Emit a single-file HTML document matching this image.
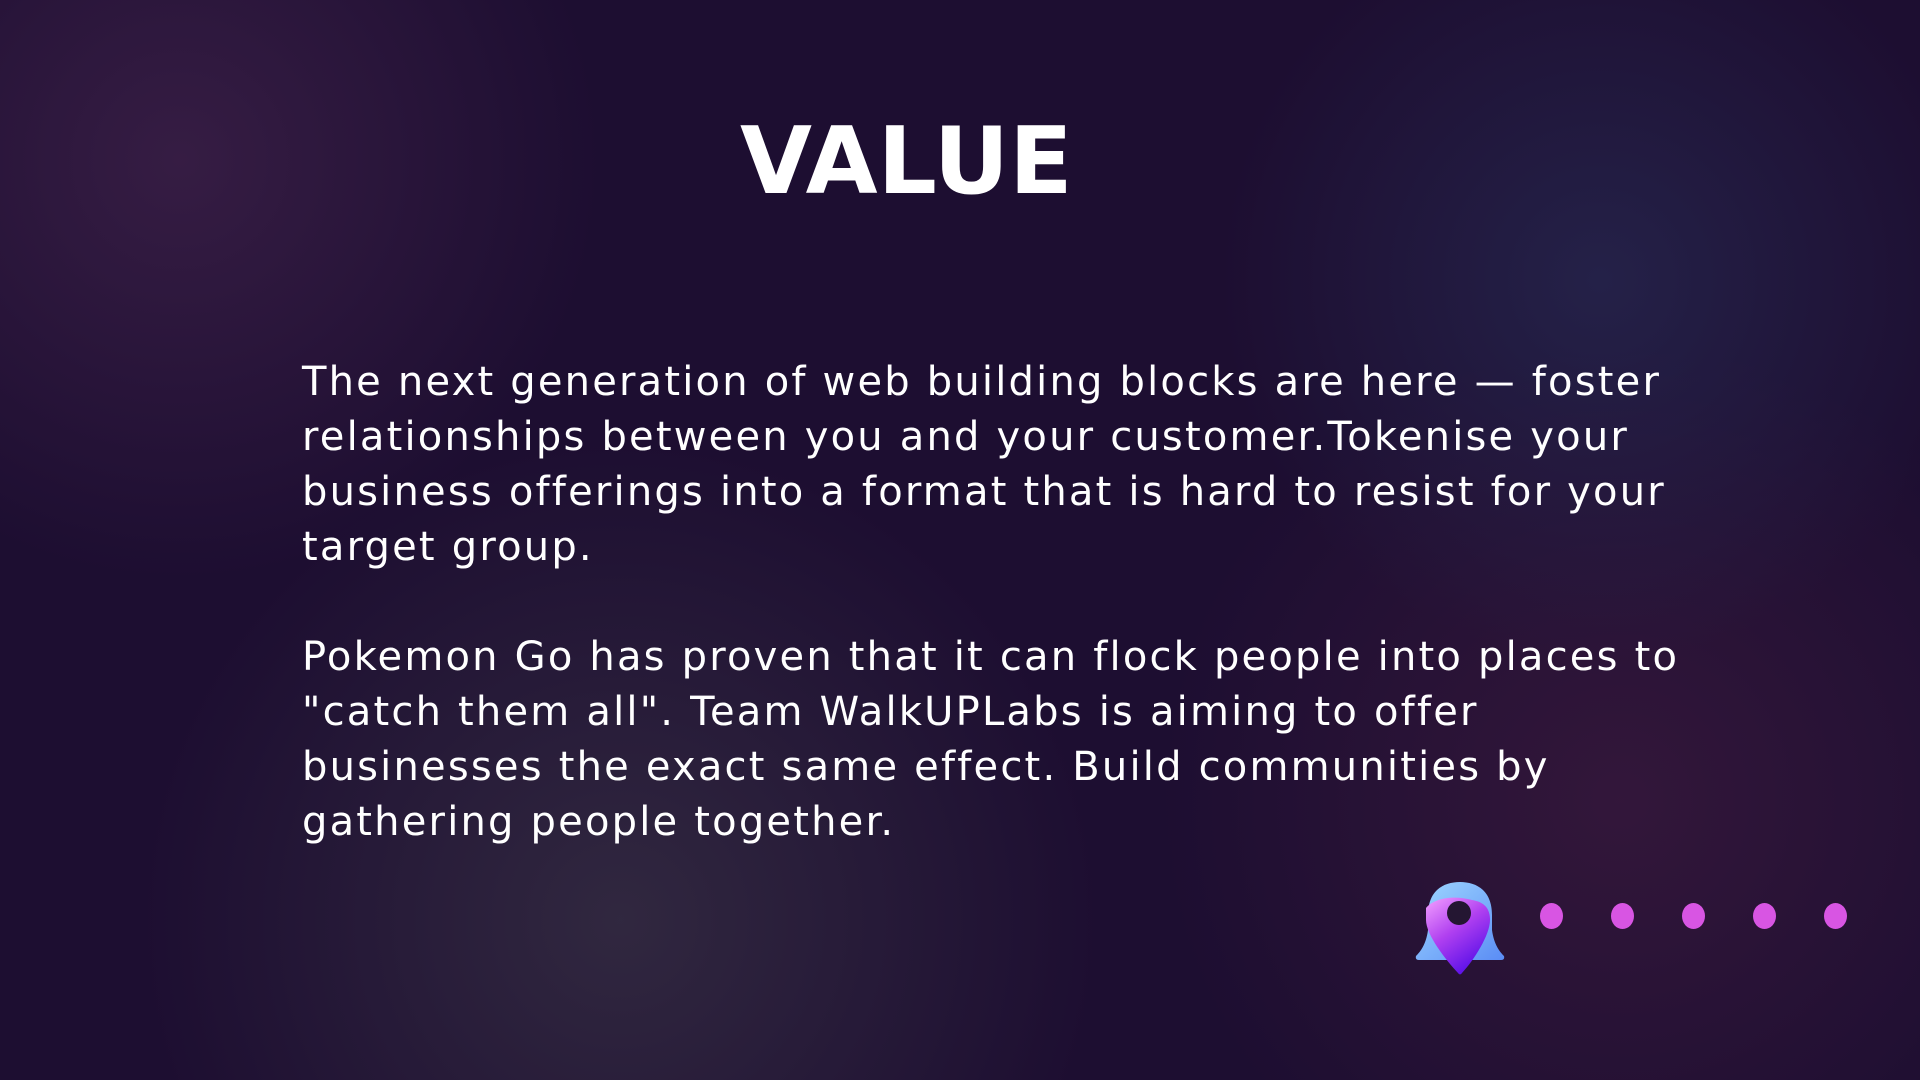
<!DOCTYPE html>
<html><head><meta charset="utf-8"><style>
html,body{margin:0;padding:0}
body{width:1920px;height:1080px;overflow:hidden;position:relative;background:#1d0e31;
background-image:
radial-gradient(circle at 180px 160px, rgba(60,32,72,.8) 0, rgba(60,32,72,0) 420px),
radial-gradient(circle at 1600px 280px, rgba(38,38,78,.8) 0, rgba(38,38,78,0) 380px),
radial-gradient(circle at 620px 920px, rgba(52,44,66,.85) 0, rgba(52,44,66,0) 480px),
radial-gradient(circle at 1620px 800px, rgba(60,26,62,.7) 0, rgba(60,26,62,0) 460px);
font-family:"DejaVu Sans","Liberation Sans",sans-serif;color:#fff}
h1{position:absolute;left:740px;top:107px;margin:0;font-size:93px;font-weight:bold;letter-spacing:0}
.p{position:absolute;left:302px;top:355px;font-size:40px;line-height:55px;white-space:nowrap;font-weight:normal;letter-spacing:2.2px}
.dot{position:absolute;width:23px;height:26px;border-radius:50%;background:#d855e3;top:903px}
</style></head><body>
<h1>VALUE</h1>
<div class="p">The next generation of web building blocks are here — foster<br>relationships between you and your customer.Tokenise your<br>business offerings into a format that is hard to resist for your<br>target group.<br><br>Pokemon Go has proven that it can flock people into places to<br>"catch them all". Team WalkUPLabs is aiming to offer<br>businesses the exact same effect. Build communities by<br>gathering people together.</div>
<svg style="position:absolute;left:1414px;top:880px" width="92" height="98" viewBox="0 0 92 98">
<defs>
<linearGradient id="b" x1="0" y1="0" x2="1" y2="1"><stop offset="0" stop-color="#9fd8ff"/><stop offset="1" stop-color="#5a8cf5"/></linearGradient>
<linearGradient id="p" x1="0" y1="0" x2="0.6" y2="1"><stop offset="0" stop-color="#f3a0ff"/><stop offset=".5" stop-color="#b040f0"/><stop offset="1" stop-color="#5a10e8"/></linearGradient>
</defs>
<path d="M14 35 C14 10 30 2 46 2 C62 2 78 10 78 35 L78 50 C80 65 86 72 90 76 Q91 80 87 80 L5 80 Q1 80 2 76 C6 72 12 65 14 50 Z" fill="url(#b)"/>
<path d="M12 28 C20 18 40 15 58 20 C70 22 76 28 76 40 C76 55 60 80 48 93 Q46 96 44 93 C32 80 12 55 12 40 Z" fill="url(#p)"/>
<circle cx="45" cy="33" r="12" fill="#241632"/>
</svg>
<div class="dot" style="left:1540px"></div>
<div class="dot" style="left:1611px"></div>
<div class="dot" style="left:1682px"></div>
<div class="dot" style="left:1753px"></div>
<div class="dot" style="left:1824px"></div>
</body></html>
